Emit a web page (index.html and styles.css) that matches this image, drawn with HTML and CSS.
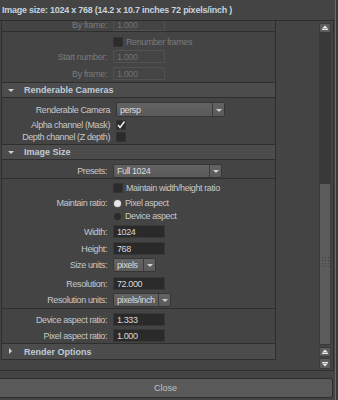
FILE: index.html
```html
<!DOCTYPE html>
<html>
<head>
<meta charset="utf-8">
<link rel="stylesheet" href="styles.css">
</head>
<body>
<div class="window">
  <div class="title">Image size: 1024 x 768 (14.2 x 10.7 inches 72 pixels/inch )</div>
  <div class="viewport">
    <div class="content">
      <div class="group ga">
        <div class="row"><span class="lbl dis">By frame:</span><span class="field dis">1.000</span></div>
      </div>
      <div class="group gb">
        <div class="row crow"><span class="lbl"></span><span class="check"><span class="box"></span><span class="ctext dis">Renumber frames</span></span></div>
        <div class="row r2"><span class="lbl dis">Start number:</span><span class="field dis">1.000</span></div>
        <div class="row r4"><span class="lbl dis">By frame:</span><span class="field dis">1.000</span></div>
      </div>
      <div class="header"><span class="tri down"></span>Renderable Cameras</div>
      <div class="group gcam">
        <div class="row cam"><span class="lbl">Renderable Camera</span><span class="drop w109"><span class="dtext">persp</span><span class="darrow"></span></span></div>
        <div class="row crow r3 cam"><span class="lbl">Alpha channel (Mask)</span><span class="box on"><svg viewBox="0 0 10 10" width="10" height="10"><polyline points="2,5 4,7.5 8.5,1.5" fill="none" stroke="#f0f0f0" stroke-width="1.4"/></svg></span></div>
        <div class="row crow cam"><span class="lbl">Depth channel (Z depth)</span><span class="box"></span></div>
      </div>
      <div class="header"><span class="tri down"></span>Image Size</div>
      <div class="group gpre">
        <div class="row"><span class="lbl">Presets:</span><span class="drop w109 h14"><span class="dtext">Full 1024</span><span class="darrow"></span></span></div>
      </div>
      <div class="group gc">
        <div class="row crow"><span class="lbl"></span><span class="check"><span class="box"></span><span class="ctext">Maintain width/height ratio</span></span></div>
        <div class="row crow r3"><span class="lbl">Maintain ratio:</span><span class="check"><span class="radio on"></span><span class="rtext">Pixel aspect</span></span></div>
        <div class="row crow r1"><span class="lbl"></span><span class="check"><span class="radio"></span><span class="rtext">Device aspect</span></span></div>
        <div class="row r3"><span class="lbl">Width:</span><span class="field">1024</span></div>
        <div class="row r4"><span class="lbl">Height:</span><span class="field">768</span></div>
        <div class="row r3"><span class="lbl">Size units:</span><span class="drop w43 h14"><span class="dtext">pixels</span><span class="darrow"></span></span></div>
        <div class="row r6"><span class="lbl">Resolution:</span><span class="field">72.000</span></div>
        <div class="row r3"><span class="lbl">Resolution units:</span><span class="drop w58 h14"><span class="dtext">pixels/inch</span><span class="darrow"></span></span></div>
      </div>
      <div class="group gd">
        <div class="row"><span class="lbl">Device aspect ratio:</span><span class="field">1.333</span></div>
        <div class="row r3"><span class="lbl">Pixel aspect ratio:</span><span class="field">1.000</span></div>
      </div>
      <div class="header last"><span class="tri right"></span>Render Options</div>
    </div>
    <div class="gap"></div>
    <div class="scrollbar">
      <div class="sbtn"><svg viewBox="0 0 12 10" width="12" height="10"><polygon points="3,5.5 6,2.5 9,5.5" fill="#e8e8e8"/><rect x="3" y="6" width="6" height="1" fill="#e8e8e8"/></svg></div>
      <div class="track"></div>
      <div class="thumb"><div class="grip"></div></div>
      <div class="sbtn b2"><svg viewBox="0 0 12 10" width="12" height="10"><polygon points="3,5.5 6,2.5 9,5.5" fill="#e8e8e8"/><rect x="3" y="6" width="6" height="1" fill="#e8e8e8"/></svg></div>
      <div class="sbtn b3"><svg viewBox="0 0 12 10" width="12" height="10"><rect x="3" y="3" width="6" height="1" fill="#e8e8e8"/><polygon points="3,4.5 6,7.5 9,4.5" fill="#e8e8e8"/></svg></div>
    </div>
  </div>
  <div class="footer"><div class="close">Close</div></div>
</div>
</body>
</html>
```
FILE: styles.css
```css
html, body {
  margin: 0;
  padding: 0;
  background: #3a3a3a;
}
body {
  width: 338px;
  height: 400px;
  overflow: hidden;
  font-family: "Liberation Sans", Arial, sans-serif;
  font-size: 9px;
  letter-spacing: -0.4px;
  color: #c8c8c8;
}
.window {
  width: 336px;
  height: 400px;
  background: #444444;
  border-right: 1px solid #6a6a6a;
  box-sizing: border-box;
  display: flex;
  flex-direction: column;
}
.title {
  height: 20px;
  line-height: 21px;
  padding-left: 2px;
  font-weight: bold;
  letter-spacing: -0.25px;
  color: #c6d2de;
  border-bottom: 1px solid #2e2e2e;
  white-space: nowrap;
  flex: none;
}
.viewport {
  width: 334px;
  height: 350px;
  box-sizing: border-box;
  border-right: 1px solid #2e2e2e;
  border-bottom: 1px solid #2e2e2e;
  display: flex;
  overflow: hidden;
  flex: none;
}
.content {
  width: 275px;
  margin-left: 1px;
  border-left: 1px solid #2e2e2e;
  border-right: 1px solid #2e2e2e;
  box-sizing: border-box;
  flex: none;
  display: flex;
  flex-direction: column;
  align-self: flex-start;
}
.gap {
  width: 43px;
  flex: none;
}
.group {
  border-bottom: 1px solid #2e2e2e;
  display: flex;
  flex-direction: column;
}
.ga { margin-top: -7px; padding-top: 4px; }
.gb { padding-top: 4px; padding-bottom: 2px; border-bottom: none; }
.gcam { padding-top: 5px; padding-bottom: 1px; border-bottom: none; }
.gpre { padding-top: 4px; padding-bottom: 1px; }
.gc { padding-top: 3px; padding-bottom: 2px; }
.gd { padding-top: 4px; padding-bottom: 1px; border-bottom: none; }
.row {
  display: flex;
  align-items: center;
  height: 13px;
  white-space: nowrap;
}
.crow { height: 12px; }
.r1 { margin-top: 1px; }
.r2 { margin-top: 2px; }
.r3 { margin-top: 3px; }
.r4 { margin-top: 4px; }
.r6 { margin-top: 6px; }
.lbl {
  width: 105px;
  text-align: right;
  margin-right: 6px;
  flex: none;
}
.cam .lbl { width: 108px; }
.dis { color: #7a7a7a; }
.field {
  width: 52px;
  height: 13px;
  box-sizing: border-box;
  background: #2a2a2a;
  border: 1px solid #383838;
  border-radius: 1px;
  padding-left: 3px;
  line-height: 12px;
  color: #d8d8d8;
}
.field.dis {
  background: #444444;
  border-color: #525252;
  color: #707070;
}
.check {
  display: flex;
  align-items: center;
}
.box {
  width: 10px;
  height: 10px;
  box-sizing: border-box;
  background: #2b2b2b;
  border: 1px solid #333;
  display: flex;
}
.box svg { display: block; margin: -1px; }
.ctext { margin-left: 3px; }
.radio {
  width: 7px;
  height: 7px;
  border-radius: 50%;
  background: #2a2a2a;
  margin-left: 1px;
}
.radio.on { background: #e6e6e6; box-shadow: 0 0 0 1px #555; }
.rtext { margin-left: 4px; }
.drop {
  height: 15px;
  box-sizing: border-box;
  background: linear-gradient(#636363, #5a5a5a);
  border: 1px solid #363636;
  border-radius: 2px;
  display: flex;
  align-items: stretch;
  color: #dcdcdc;
}
.h14 { height: 14px; }
.w109 { width: 109px; }
.w43 { width: 43px; }
.w58 { width: 58px; }
.dtext {
  flex: 1;
  padding-left: 3px;
  display: flex;
  align-items: center;
  overflow: hidden;
}
.darrow {
  width: 11px;
  border-left: 1px solid #3c3c3c;
  flex: none;
  position: relative;
}
.darrow::after {
  content: "";
  position: absolute;
  left: 3px;
  top: 50%;
  margin-top: -1px;
  border-left: 3px solid transparent;
  border-right: 3px solid transparent;
  border-top: 3px solid #d0d0d0;
}
.header {
  height: 14px;
  background: #4c4c4c;
  border-top: 1px solid #2e2e2e;
  border-bottom: 1px solid #2e2e2e;
  display: flex;
  align-items: center;
  font-weight: bold;
  letter-spacing: 0;
  color: #bfcbd8;
  padding-left: 22px;
  position: relative;
  white-space: nowrap;
}
.header.last { height: 15px; }
.tri {
  position: absolute;
  width: 0;
  height: 0;
}
.tri.down {
  left: 6px;
  top: 6px;
  border-left: 3px solid transparent;
  border-right: 3px solid transparent;
  border-top: 3px solid #cfcfcf;
}
.tri.right {
  left: 7px;
  top: 4px;
  border-top: 3px solid transparent;
  border-bottom: 3px solid transparent;
  border-left: 3px solid #cfcfcf;
}
.scrollbar {
  width: 12px;
  flex: none;
  display: flex;
  flex-direction: column;
  padding-top: 2px;
}
.sbtn {
  height: 10px;
  box-sizing: border-box;
  background: #5d5d5d;
  border: 1px solid #3a3a3a;
  border-radius: 2px;
  display: flex;
  align-items: center;
  justify-content: center;
  flex: none;
}
.sbtn svg { display: block; margin: -1px; }
.sbtn.b2 { margin-top: 2px; }
.sbtn.b3 { margin-top: 1px; height: 11px; }
.track {
  height: 150px;
  background: #383838;
  flex: none;
}
.thumb {
  height: 162px;
  box-sizing: border-box;
  background: #5c5c5c;
  border: 1px solid #3a3a3a;
  flex: none;
  display: flex;
  justify-content: center;
  padding-top: 72px;
}
.grip {
  width: 8px;
  height: 12px;
  background-image: radial-gradient(circle, #3e3e3e 0.8px, transparent 1px);
  background-size: 3px 3px;
}
.footer {
  flex: 1;
  padding-top: 7px;
  padding-right: 2px;
}
.close {
  height: 20px;
  box-sizing: border-box;
  margin-left: -2px;
  background: #5a5a5a;
  border: 1px solid #2e2e2e;
  border-radius: 3px;
  color: #c0c0c0;
  display: flex;
  align-items: center;
  justify-content: center;
  letter-spacing: 0;
}
```
